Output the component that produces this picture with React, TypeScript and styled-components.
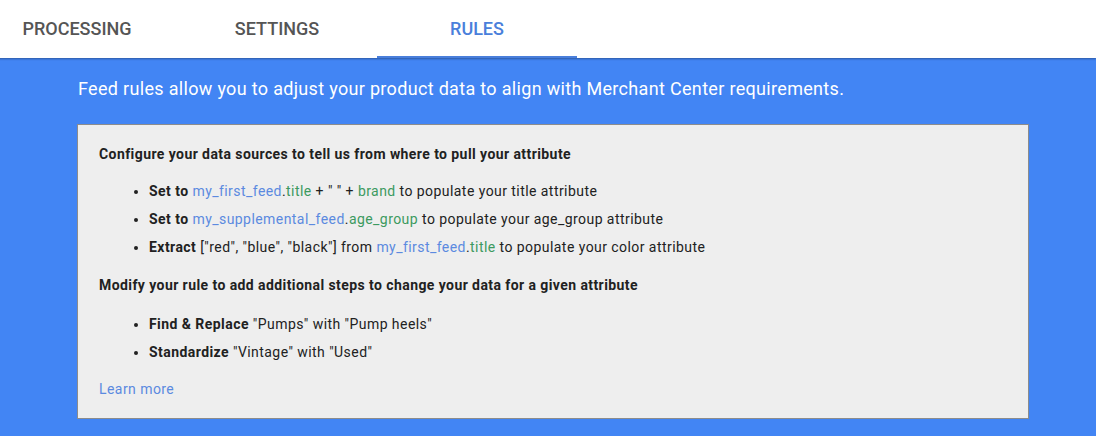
import React from 'react';
import styled, { createGlobalStyle } from 'styled-components';

const colors = {
  blue: '#4285f4',
  tabActive: '#4a7fdb',
  tabText: '#555555',
  source: '#5b8ae0',
  field: '#3c9a5f',
  panel: '#eeeeee',
  panelBorder: '#8c8c8c',
  text: '#212121'
};

const GlobalStyle = createGlobalStyle`
  html, body {
    margin: 0;
    padding: 0;
    background: ${colors.blue};
    font-family: Roboto, 'Liberation Sans', Arial, sans-serif;
  }
`;

const Page = styled.div`
  width: 1096px;
  min-height: 436px;
  overflow: hidden;
  background: ${colors.blue};
`;

const TabBar = styled.nav`
  position: relative;
  z-index: 1;
  display: flex;
  height: 58px;
  margin-left: -23px;
  background: #fff;
  box-shadow: 0 1px 2px rgba(0, 0, 0, 0.35);
`;

const Tab = styled.div<{ active?: boolean }>`
  box-sizing: border-box;
  width: 200px;
  height: 58px;
  padding-top: 1px;
  display: flex;
  align-items: center;
  justify-content: center;
  font-size: 18px;
  font-weight: 500;
  color: ${({ active }) => (active ? colors.tabActive : colors.tabText)};
  border-bottom: 2px solid ${({ active }) => (active ? colors.tabActive : 'transparent')};
`;

const Content = styled.main`
  padding: 19px 67px 17px 77px;
`;

const Intro = styled.p`
  margin: 0 0 23px 1px;
  font-size: 18px;
  line-height: 24px;
  letter-spacing: 0.32px;
  color: #fff;
`;

const Panel = styled.section`
  width: 952px;
  box-sizing: border-box;
  padding: 19px 22px 19px 21px;
  background: ${colors.panel};
  border: 1px solid ${colors.panelBorder};
  color: ${colors.text};
  font-size: 14px;
  letter-spacing: 0.44px;
`;

const PanelHeading = styled.h3`
  margin: 0;
  font-size: 14px;
  font-weight: 700;
  line-height: 20px;
  letter-spacing: 0.42px;
`;

const RuleList = styled.ul`
  margin: 13px 0 14px;
  padding-left: 50px;
  line-height: 28px;

  &:last-of-type {
    margin: 15px 0 13px;
  }

  li::marker {
    font-size: 13px;
  }

  b {
    font-weight: 700;
  }
`;

const Source = styled.span`
  color: ${colors.source};
`;

const Field = styled.span`
  color: ${colors.field};
`;

const LearnMore = styled.a`
  display: block;
  font-size: 14px;
  line-height: 20px;
  color: ${colors.source};
  text-decoration: none;
`;

const App = () => (
  <Page>
    <GlobalStyle />
    <TabBar>
      <Tab>PROCESSING</Tab>
      <Tab>SETTINGS</Tab>
      <Tab active>RULES</Tab>
    </TabBar>
    <Content>
      <Intro>Feed rules allow you to adjust your product data to align with Merchant Center requirements.</Intro>
      <Panel>
        <PanelHeading>Configure your data sources to tell us from where to pull your attribute</PanelHeading>
        <RuleList>
          <li>
            <b>Set to</b> <Source>my_first_feed</Source>.<Field>title</Field> + " " + <Field>brand</Field> to populate your title attribute
          </li>
          <li>
            <b>Set to</b> <Source>my_supplemental_feed</Source>.<Field>age_group</Field> to populate your age_group attribute
          </li>
          <li>
            <b>Extract</b> ["red", "blue", "black"] from <Source>my_first_feed</Source>.<Field>title</Field> to populate your color attribute
          </li>
        </RuleList>
        <PanelHeading>Modify your rule to add additional steps to change your data for a given attribute</PanelHeading>
        <RuleList>
          <li>
            <b>Find &amp; Replace</b> "Pumps" with "Pump heels"
          </li>
          <li>
            <b>Standardize</b> "Vintage" with "Used"
          </li>
        </RuleList>
        <LearnMore href="#">Learn more</LearnMore>
      </Panel>
    </Content>
  </Page>
);

export default App;
